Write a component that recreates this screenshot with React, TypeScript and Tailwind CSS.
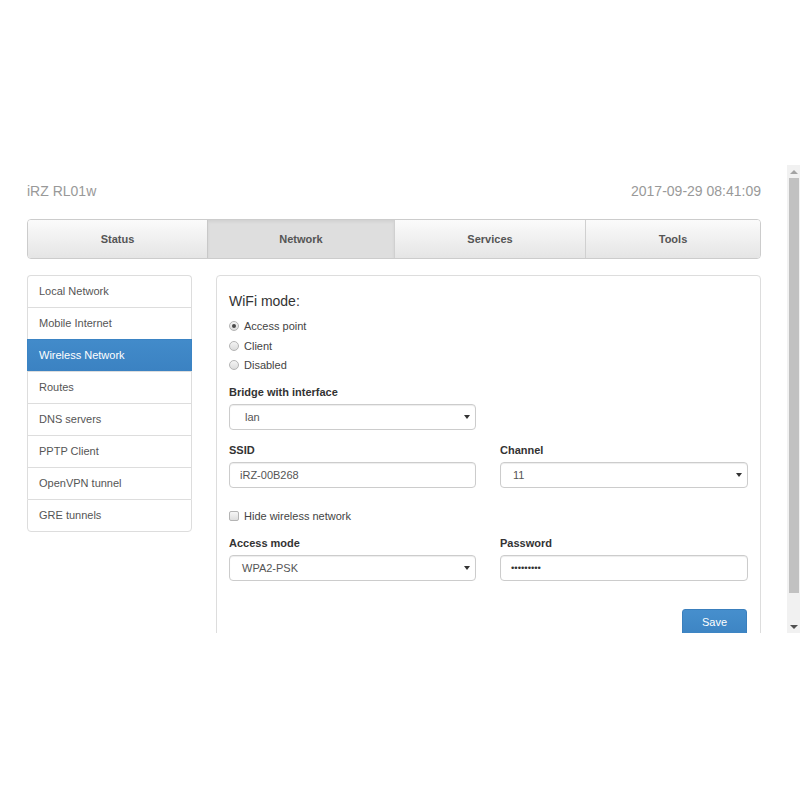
import React from "react";

function Radio({ checked, label }: { checked?: boolean; label: string }) {
  return (
    <div className="h-[19.5px] flex items-center">
      <span className="w-[10px] h-[10px] rounded-full border border-[#b4b4b4] bg-linear-to-b from-[#f4f4f4] to-[#dcdcdc] flex items-center justify-center">
        {checked && <span className="w-[4px] h-[4px] rounded-full bg-[#4a4a4a]" />}
      </span>
      <span className="ml-[5px] text-[11px] text-[#444]">{label}</span>
    </div>
  );
}

function Caret() {
  return (
    <span className="w-0 h-0 border-x-[3px] border-x-transparent border-t-[4px] border-t-[#333]" />
  );
}

function SelectBox({ value, pl = "pl-[12px]" }: { value: string; pl?: string }) {
  return (
    <div
      className={`h-[26px] border border-[#ccc] rounded-[4px] bg-white shadow-[inset_0_1px_1px_rgba(0,0,0,0.075)] flex items-center justify-between ${pl} pr-[5px] text-[11px] text-[#555]`}
    >
      <span>{value}</span>
      <Caret />
    </div>
  );
}

function InputBox({ children }: { children: React.ReactNode }) {
  return (
    <div className="h-[26px] border border-[#ccc] rounded-[4px] bg-white shadow-[inset_0_1px_1px_rgba(0,0,0,0.075)] flex items-center pl-[10px] text-[11px] text-[#555]">
      {children}
    </div>
  );
}

function Label({ children }: { children: React.ReactNode }) {
  return <div className="h-[16px] flex items-center text-[11px] font-bold text-[#333]">{children}</div>;
}

const navItems = [
  "Local Network",
  "Mobile Internet",
  "Wireless Network",
  "Routes",
  "DNS servers",
  "PPTP Client",
  "OpenVPN tunnel",
  "GRE tunnels",
];

export default function App() {
  return (
    <div className="w-[800px] h-[800px] bg-white flex flex-col font-['Liberation_Sans',Arial,sans-serif]">
      <div className="h-[165px] shrink-0" />
      <div className="h-[468px] shrink-0 flex">
        <div className="w-[787px] h-full overflow-hidden pl-[27px] pr-[26px]">
          <div className="pt-[16px] h-[36px] flex items-end">
            <div className="w-full h-[20px] flex items-center justify-between text-[14px] text-[#999]">
              <span>iRZ RL01w</span>
              <span>2017-09-29 08:41:09</span>
            </div>
          </div>

          <div className="mt-[18px] h-[40px] border border-[#ccc] rounded-[4px] flex overflow-hidden text-[11px] font-bold text-[#555]">
            <div className="w-[179px] h-full flex items-center justify-center bg-linear-to-b from-[#fbfbfb] to-[#e5e5e5]">
              Status
            </div>
            <div className="w-[187px] h-full flex items-center justify-center border-l border-[#c8c8c8] bg-[#dedede] shadow-[inset_0_2px_3px_rgba(0,0,0,0.06)]">
              Network
            </div>
            <div className="w-[191px] h-full flex items-center justify-center border-l border-[#d0d0d0] bg-linear-to-b from-[#fbfbfb] to-[#e5e5e5]">
              Services
            </div>
            <div className="w-[175px] h-full flex items-center justify-center border-l border-[#d0d0d0] bg-linear-to-b from-[#fbfbfb] to-[#e5e5e5]">
              Tools
            </div>
          </div>

          <div className="mt-[16px] flex gap-[24px] items-start">
            <div className="w-[165px] shrink-0 flex flex-col">
              {navItems.map((item, i) => {
                const active = item === "Wireless Network";
                const first = i === 0;
                const last = i === navItems.length - 1;
                return (
                  <div
                    key={item}
                    className={`${last ? "h-[33px] border-b rounded-b-[4px]" : "h-[32px]"} ${
                      first ? "rounded-t-[4px]" : ""
                    } border-x border-t flex items-center pl-[11px] text-[11px] ${
                      active
                        ? "border-[#3b84c4] bg-linear-to-b from-[#428bca] to-[#3b82c2] text-white"
                        : "border-[#ddd] bg-white text-[#555]"
                    }`}
                  >
                    {item}
                  </div>
                );
              })}
            </div>

            <div className="w-[545px] border border-[#ddd] rounded-[4px] px-[12px] pt-[15px] pb-[30px]">
              <div className="h-[20px] flex items-center text-[14px] text-[#333]">WiFi mode:</div>
              <div className="mt-[5.5px]">
                <Radio checked label="Access point" />
                <Radio label="Client" />
                <Radio label="Disabled" />
              </div>

              <div className="mt-[9px] grid grid-cols-[247px_248px] gap-x-[24px]">
                <div>
                  <Label>Bridge with interface</Label>
                  <div className="mt-[4px]">
                    <SelectBox value="lan" pl="pl-[15px]" />
                  </div>
                </div>
              </div>

              <div className="mt-[12px] grid grid-cols-[247px_248px] gap-x-[24px]">
                <div>
                  <Label>SSID</Label>
                  <div className="mt-[4px]">
                    <InputBox>iRZ-00B268</InputBox>
                  </div>
                </div>
                <div>
                  <Label>Channel</Label>
                  <div className="mt-[4px]">
                    <SelectBox value="11" />
                  </div>
                </div>
              </div>

              <div className="mt-[20px] h-[16px] flex items-center">
                <span className="w-[10px] h-[10px] rounded-[2px] border border-[#b4b4b4] bg-linear-to-b from-[#f6f6f6] to-[#dedede]" />
                <span className="ml-[5px] text-[11px] text-[#444]">Hide wireless network</span>
              </div>

              <div className="mt-[11px] grid grid-cols-[247px_248px] gap-x-[24px]">
                <div>
                  <Label>Access mode</Label>
                  <div className="mt-[4px]">
                    <SelectBox value="WPA2-PSK" />
                  </div>
                </div>
                <div>
                  <Label>Password</Label>
                  <div className="mt-[4px]">
                    <InputBox>
                      <span className="text-[9.5px] text-[#333]">•••••••••</span>
                    </InputBox>
                  </div>
                </div>
              </div>

              <div className="mt-[28px] flex justify-end pr-[1px]">
                <div className="w-[65px] h-[27px] rounded-[3px] border border-[#3a7fbd] bg-linear-to-b from-[#468fcd] to-[#3d84c3] flex items-center justify-center text-[11px] text-white">
                  Save
                </div>
              </div>
            </div>
          </div>
        </div>

        <div className="w-[13px] h-full bg-[#f1f1f1] flex flex-col items-center">
          <div className="h-[13px] w-full flex items-center justify-center">
            <span className="w-0 h-0 border-x-[4px] border-x-transparent border-b-[4px] border-b-[#a3a3a3]" />
          </div>
          <div className="w-[10px] h-[415px] bg-[#c1c1c1]" />
          <div className="flex-1" />
          <div className="h-[13px] w-full flex items-center justify-center">
            <span className="w-0 h-0 border-x-[4px] border-x-transparent border-t-[4px] border-t-[#505050]" />
          </div>
        </div>
      </div>
      <div className="flex-1" />
    </div>
  );
}
